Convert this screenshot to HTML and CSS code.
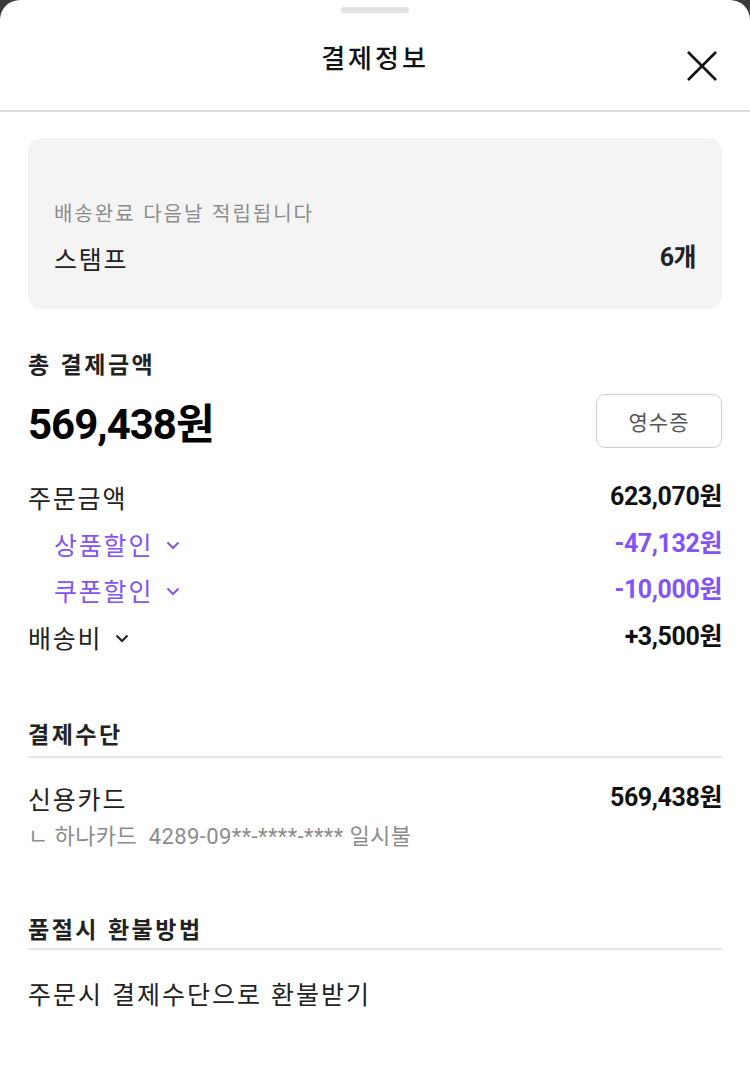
FILE: index.html
```html
<!DOCTYPE html>
<html lang="ko">
<head>
<meta charset="utf-8">
<link rel="stylesheet" href="styles.css">
</head>
<body>
<div class="sheet">
  <div class="handle"></div>
  <header class="header">
    <h1 class="title">결제정보</h1>
    <button class="close" aria-label="닫기">
      <svg width="32" height="32" viewBox="0 0 32 32"><path d="M2 2 L30 30 M30 2 L2 30" stroke="#111" stroke-width="2.6" fill="none"/></svg>
    </button>
  </header>
  <main class="content">
    <section class="stamp-card">
      <p class="stamp-note">배송완료 다음날 적립됩니다</p>
      <div class="stamp-row">
        <span class="stamp-label">스탬프</span>
        <span class="stamp-count">6개</span>
      </div>
    </section>

    <section class="total">
      <h2 class="total-title">총 결제금액</h2>
      <div class="total-row">
        <span class="total-amount">569,438원</span>
        <button class="receipt">영수증</button>
      </div>
    </section>

    <section class="breakdown">
      <div class="line">
        <span class="label">주문금액</span>
        <span class="value">623,070원</span>
      </div>
      <div class="line sub purple">
        <span class="label">상품할인 <svg class="chev" width="16" height="10" viewBox="0 0 16 10"><path d="M2.5 2.5 L8 8 L13.5 2.5" stroke="currentColor" stroke-width="2" fill="none"/></svg></span>
        <span class="value">-47,132원</span>
      </div>
      <div class="line sub purple">
        <span class="label">쿠폰할인 <svg class="chev" width="16" height="10" viewBox="0 0 16 10"><path d="M2.5 2.5 L8 8 L13.5 2.5" stroke="currentColor" stroke-width="2" fill="none"/></svg></span>
        <span class="value">-10,000원</span>
      </div>
      <div class="line">
        <span class="label">배송비 <svg class="chev" width="16" height="10" viewBox="0 0 16 10"><path d="M2.5 2.5 L8 8 L13.5 2.5" stroke="currentColor" stroke-width="2" fill="none"/></svg></span>
        <span class="value">+3,500원</span>
      </div>
    </section>

    <section class="block pay">
      <h2 class="block-title">결제수단</h2>
      <div class="line first">
        <span class="label">신용카드</span>
        <span class="value">569,438원</span>
      </div>
      <p class="card-info">ㄴ 하나카드&nbsp; 4289-09**-****-**** 일시불</p>
    </section>

    <section class="block refund">
      <h2 class="block-title">품절시 환불방법</h2>
      <p class="refund-text">주문시 결제수단으로 환불받기</p>
    </section>
  </main>
</div>
</body>
</html>
```

FILE: styles.css
```css
* { box-sizing: border-box; }
html, body { margin: 0; padding: 0; }
body {
  background: #3a3a3a;
  font-family: "Roboto", "Noto Sans CJK KR", sans-serif;
  color: #222;
}
.sheet {
  background: #fff;
  border-radius: 20px 20px 0 0;
  min-height: 1086px;
  overflow: hidden;
}
.handle {
  width: 68px;
  height: 6px;
  margin: 7px auto 0;
  border-radius: 3px;
  background: #e2e2e2;
}
.header {
  position: relative;
  height: 99px;
  border-bottom: 2px solid #dcdcdc;
  display: flex;
  align-items: center;
  justify-content: center;
}
.title {
  margin: 0 0 10px;
  font-size: 26px;
  letter-spacing: 3px;
  font-weight: 500;
  color: #111;
  font-family: "Noto Sans CJK KR", sans-serif;
}
.close {
  position: absolute;
  right: 32px;
  top: 37px;
  width: 32px;
  height: 32px;
  padding: 0;
  border: 0;
  background: none;
}
.close svg { display: block; }
.content { padding: 0 28px; }
.stamp-card {
  margin-top: 26px;
  background: #f4f4f4;
  border-radius: 14px;
  padding: 62px 26px 36px;
}
.stamp-note {
  margin: 0;
  font-size: 20px;
  letter-spacing: 2px;
  line-height: 26px;
  color: #8c8c8c;
  font-family: "Noto Sans CJK KR", sans-serif;
}
.stamp-row {
  margin-top: 17px;
  display: flex;
  justify-content: space-between;
  align-items: center;
  line-height: 30px;
}
.stamp-label { font-size: 25px; letter-spacing: 1.8px; color: #222; font-family: "Noto Sans CJK KR", sans-serif; }
.stamp-count { font-size: 25px; font-weight: 700; letter-spacing: -0.5px; }
.total { margin-top: 40px; }
.total-title {
  margin: 0;
  font-size: 23px;
  letter-spacing: 2.5px;
  line-height: 28px;
  font-weight: 700;
  font-family: "Noto Sans CJK KR", sans-serif;
}
.total-row {
  margin-top: 13px;
  display: flex;
  justify-content: space-between;
  align-items: center;
}
.total-amount {
  font-size: 42px;
  font-weight: 700;
  letter-spacing: -1px;
  color: #000;
}
.receipt {
  width: 126px;
  height: 54px;
  border: 1px solid #cfcfcf;
  border-radius: 9px;
  background: #fff;
  font-family: "Noto Sans CJK KR", sans-serif;
  font-size: 21px;
  letter-spacing: 1px;
  color: #555;
}
.breakdown {
  margin-top: 31px;
  display: flex;
  flex-direction: column;
  gap: 16.5px;
}
.line {
  display: flex;
  justify-content: space-between;
  align-items: center;
  line-height: 30px;
}
.label {
  font-size: 25px;
  letter-spacing: 1.8px;
  color: #222;
  font-family: "Noto Sans CJK KR", sans-serif;
  display: inline-flex;
  align-items: center;
  gap: 12px;
}
.value {
  font-size: 25px;
  font-weight: 700;
  letter-spacing: -0.4px;
  color: #111;
}
.sub .label { padding-left: 26px; }
.purple .label, .purple .value { color: #8254f4; }
.chev { display: block; margin-top: 2px; }
.block-title {
  margin: 0;
  font-size: 23px;
  letter-spacing: 2.5px;
  line-height: 28px;
  font-weight: 700;
  padding-bottom: 9px;
  border-bottom: 2px solid #e6e6e6;
  font-family: "Noto Sans CJK KR", sans-serif;
}
.pay { margin-top: 67px; }
.pay .line.first { margin-top: 25px; }
.card-info {
  margin: 11px 0 0;
  font-size: 22px;
  line-height: 26px;
  color: #8c8c8c;
  letter-spacing: 0.4px;
}
.refund { margin-top: 64px; }
.refund .block-title { padding-bottom: 6px; }
.refund-text {
  margin: 28px 0 0;
  font-size: 25px;
  letter-spacing: 2px;
  line-height: 30px;
  color: #222;
  font-family: "Noto Sans CJK KR", sans-serif;
}
```
